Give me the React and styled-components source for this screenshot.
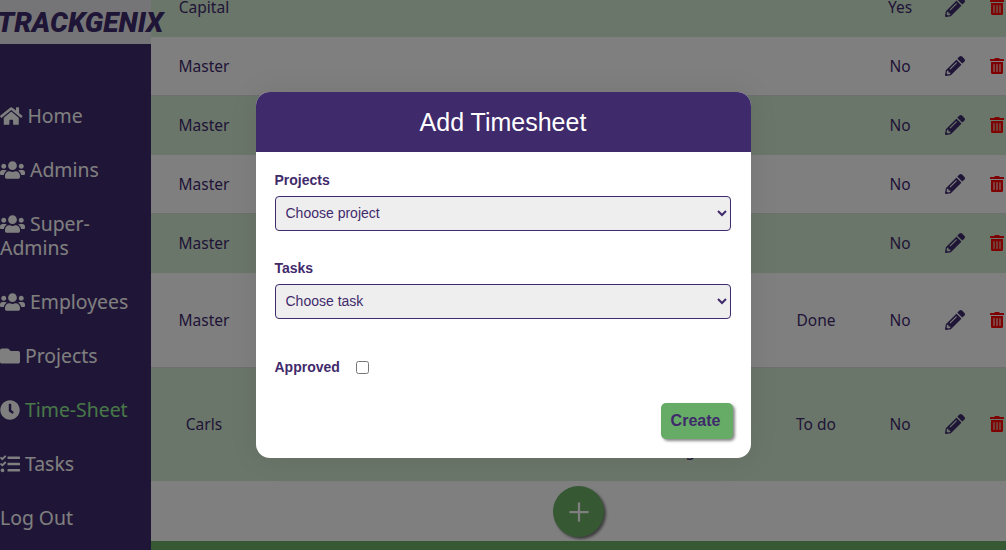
import styled, { createGlobalStyle } from 'styled-components'
import { FaHome, FaUsers, FaFolder, FaClock, FaTasks, FaPencilAlt, FaTrashAlt } from 'react-icons/fa'
import { Plus } from 'lucide-react'

const rows = [
  { name: 'Capital', approved: 'Yes', height: 37, clipped: true, green: true },
  { name: 'Master', approved: 'No', height: 59 },
  { name: 'Master', approved: 'No', height: 59, green: true },
  { name: 'Master', approved: 'No', height: 59 },
  { name: 'Master', approved: 'No', height: 59, green: true },
  { name: 'Master', status: 'Done', approved: 'No', height: 95 },
  { name: 'Carls', status: 'To do', approved: 'No', height: 113, green: true, lines: ['Review', 'the time', 'tracking'] },
]

const links = [
  { label: 'Home', Icon: FaHome, iconWidth: 22.5 },
  { label: 'Admins', Icon: FaUsers, iconWidth: 25 },
  { label: 'Super-Admins', Icon: FaUsers, iconWidth: 25 },
  { label: 'Employees', Icon: FaUsers, iconWidth: 25 },
  { label: 'Projects', Icon: FaFolder, iconWidth: 20 },
  { label: 'Time-Sheet', Icon: FaClock, iconWidth: 20, active: true },
  { label: 'Tasks', Icon: FaTasks, iconWidth: 20 },
  { label: 'Log Out' },
]

function App() {
  return (
    <Page>
      <GlobalStyle />
      <Side>
        <Brand>TRACKGENIX</Brand>
        <Nav>
          {links.map(({ label, Icon, iconWidth, active }) => (
            <NavLink key={label} $active={active} $iconWidth={iconWidth}>
              {Icon && <Icon />}
              <span>{label}</span>
            </NavLink>
          ))}
        </Nav>
      </Side>
      <Main>
        <Table>
          {rows.map((row, i) => (
            <Row key={i} $height={row.height} $clipped={row.clipped} $green={row.green}>
              <Cell>{row.name}</Cell>
              <Description>
                {row.lines && row.lines.map((line) => <div key={line}>{line}</div>)}
              </Description>
              <Cell>{row.status}</Cell>
              <Cell>{row.approved}</Cell>
              <Cell><EditIcon /></Cell>
              <TrashCell><DeleteIcon /></TrashCell>
            </Row>
          ))}
        </Table>
        <AddBar>
          <AddButton><Plus size={30} strokeWidth={1.8} /></AddButton>
        </AddBar>
        <Footer />
      </Main>
      <Overlay>
        <Modal>
          <ModalHeader>Add Timesheet</ModalHeader>
          <ModalForm>
            <Field>
              <Label>Projects</Label>
              <Select defaultValue="">
                <option value="">Choose project</option>
              </Select>
            </Field>
            <Field>
              <Label>Tasks</Label>
              <Select defaultValue="">
                <option value="">Choose task</option>
              </Select>
            </Field>
            <CheckRow>
              <Label>Approved</Label>
              <Check type="checkbox" />
            </CheckRow>
            <Actions>
              <CreateButton type="button">Create</CreateButton>
            </Actions>
          </ModalForm>
        </Modal>
      </Overlay>
    </Page>
  )
}

export default App

const GlobalStyle = createGlobalStyle`
  * { box-sizing: border-box; }
  body {
    margin: 0;
    overflow: hidden;
    font-family: "Noto Sans", sans-serif;
  }
`

const Page = styled.div`
  position: relative;
  display: flex;
  width: 1006px;
  height: 550px;
  overflow: hidden;
`

const Side = styled.aside`
  width: 151px;
  flex-shrink: 0;
  display: flex;
  flex-direction: column;
  background: #3e2a6d;
`

const Brand = styled.div`
  position: relative;
  z-index: 1;
  height: 44px;
  flex-shrink: 0;
  padding-top: 5px;
  margin-left: -3px;
  width: 154px;
  background: #ebebf0;
  color: #3e2a6d;
  font-family: Roboto, sans-serif;
  font-size: 28px;
  font-weight: 900;
  font-style: italic;
  line-height: 36px;
  white-space: nowrap;
`

const Nav = styled.nav`
  display: flex;
  flex-direction: column;
  gap: 30px;
  padding-top: 60px;
`

const NavLink = styled.a`
  display: block;
  color: #fff;
  font-size: 19.4px;
  line-height: 24px;

  span {
    color: ${(p) => (p.$active ? '#90ee90' : '#fff')};
  }

  svg {
    width: ${(p) => p.$iconWidth}px;
    height: 20px;
    margin-right: 5px;
    vertical-align: -3px;
  }
`

const Main = styled.main`
  flex: 1;
  min-width: 0;
  display: flex;
  flex-direction: column;
`

const Table = styled.div`
  display: flex;
  flex-direction: column;
`

const Row = styled.div`
  display: grid;
  grid-template-columns: 106px 1fr 100px 68px 42px 30px;
  align-items: center;
  align-content: center;
  height: ${(p) => p.$height}px;
  overflow: hidden;
  padding-bottom: ${(p) => (p.$clipped ? '23px' : '0')};
  background: ${(p) => (p.$green ? '#d6ecd4' : '#fff')};
  border-bottom: 1px solid ${(p) => (p.$green ? 'transparent' : '#dedede')};
  color: #3e2a6d;
  font-size: 15.5px;
`

const Cell = styled.div`
  display: flex;
  justify-content: center;
  align-items: center;
  line-height: 24px;
`

const Description = styled.div`
  padding: 4px 71px 0 0;
  text-align: right;
  line-height: 24px;
`

const TrashCell = styled(Cell)`
  justify-content: flex-end;
  padding-right: 2px;
`

const EditIcon = styled(FaPencilAlt)`
  width: 20px;
  height: 20px;
  color: #3e2a6d;
`

const DeleteIcon = styled(FaTrashAlt)`
  width: 14px;
  height: 16px;
  color: #ff0000;
`

const AddBar = styled.div`
  height: 60px;
  display: flex;
  justify-content: center;
  padding-top: 5px;
  background: #fff;
`

const AddButton = styled.div`
  width: 51px;
  height: 51px;
  display: flex;
  align-items: center;
  justify-content: center;
  border-radius: 50%;
  background: #6cb066;
  color: #fff;
  box-shadow: 2px 2px 3px #777;
`

const Footer = styled.footer`
  flex: 1;
  background: #6cb066;
`

const Overlay = styled.div`
  position: absolute;
  inset: 0;
  z-index: 2;
  display: flex;
  align-items: center;
  justify-content: center;
  background: rgba(0, 0, 0, 0.5);
`

const Modal = styled.div`
  width: 495px;
  height: 366px;
  border-radius: 14px;
  overflow: hidden;
  background: #fff;
  font-family: "Liberation Sans", Arial, sans-serif;
  box-shadow: 0 0 30px rgba(0, 0, 0, 0.08);
`

const ModalHeader = styled.h2`
  margin: 0;
  height: 60px;
  display: flex;
  align-items: center;
  justify-content: center;
  background: #3f2a6b;
  color: #fff;
  font-size: 25px;
  font-weight: 400;
`

const ModalForm = styled.form`
  display: flex;
  flex-direction: column;
  padding: 20px 18px 0 19px;
`

const Field = styled.div`
  display: flex;
  flex-direction: column;
  gap: 8px;
  margin-bottom: 28px;

  &:first-child {
    margin-bottom: 29px;
  }
`

const Label = styled.label`
  color: #3f2a6b;
  font-size: 14px;
  font-weight: 700;
  line-height: 16px;
`

const Select = styled.select`
  width: 456px;
  height: 35px;
  padding: 0 0 2px 6px;
  border: 1px solid #3f2a6b;
  border-radius: 4px;
  background: #eeeeee;
  color: #3f2a6b;
  font-family: inherit;
  font-size: 14px;
`

const CheckRow = styled.div`
  display: flex;
  align-items: center;
  gap: 16px;
  margin-top: 12px;
`

const Check = styled.input`
  width: 13px;
  height: 13px;
  margin: 0;
`

const Actions = styled.div`
  display: flex;
  justify-content: flex-end;
  margin-top: 28px;
`

const CreateButton = styled.button`
  width: 72px;
  height: 36px;
  padding: 0 2px 0 0;
  border: none;
  border-radius: 5px;
  background: #66ab66;
  color: #3f2a6b;
  font-family: inherit;
  font-size: 16px;
  font-weight: 700;
  box-shadow: 2px 2px 3px #888;
`
